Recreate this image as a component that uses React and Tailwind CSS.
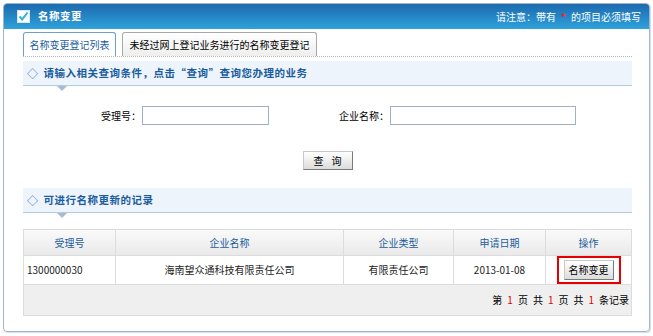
import React from 'react';

const font = { fontFamily: '"Noto Sans CJK SC", "Liberation Sans", sans-serif' };

function SectionTitle({ children }) {
  return (
    <div>
      <div className="h-[25px] bg-[#eef4fc] border-b border-[#b6cade] flex items-center pl-[4px] text-[10.5px] font-bold tracking-[0.5px] text-[#1b5c9c] leading-none">
        <span className="mr-[5px] font-normal text-[11px] text-[#2a6cb0]">◇</span>
        {children}
      </div>
      <div className="ml-[34px] w-0 h-0 border-l-[5px] border-r-[5px] border-t-[5px] border-l-transparent border-r-transparent border-t-[#a9bccf]" />
    </div>
  );
}

function Btn({ children, className = '' }) {
  return (
    <button className={`bg-gradient-to-b from-[#ffffff] to-[#dcdcdc] border border-t-[#c8c8c8] border-l-[#c8c8c8] border-r-[#7a7a7a] border-b-[#7a7a7a] text-[10px] text-black leading-none whitespace-nowrap ${className}`}>
      {children}
    </button>
  );
}

export default function App() {
  return (
    <div className="w-[653px] h-[336px] bg-white pt-[3px] pl-[3px]" style={font}>
      <div className="w-[647px] h-[329px] border border-[#9fb5cd] rounded-[4px] overflow-hidden shadow-[1px_1px_1px_#d4dde8]">
        {/* ── Header ── */}
        <div className="h-[25px] bg-gradient-to-b from-[#1c6aae] to-[#2fa2dc] flex items-center pl-[13px] pr-[8px]">
          <svg width="13" height="13" viewBox="0 0 13 13" className="mr-[8px]">
            <rect x="0.5" y="0.5" width="12" height="12" fill="#ffffff" stroke="#d8e6f2" />
            <path d="M2.5 6.5 L5.2 9.5 L10.5 2.5" fill="none" stroke="#2bb3dd" strokeWidth="2" />
          </svg>
          <span className="text-[10.5px] font-bold tracking-[0.5px] text-white leading-none">名称变更</span>
          <span className="ml-auto text-[10px] text-white leading-none whitespace-nowrap">
            请注意：带有<span className="text-[#ff2020] font-bold mx-[5px]">*</span>的项目必须填写
          </span>
        </div>

        <div className="pl-[19px] pr-[17px]">
          {/* ── Tabs ── */}
          <div className="mt-[4px] flex items-end border-b border-dotted border-[#b8b8b8] h-[24px]">
            <div className="w-[93px] h-[24px] border border-b-0 border-[#6a9fd0] rounded-t-[3px] bg-white flex items-center justify-center text-[10px] leading-none whitespace-nowrap text-[#1b5c9c]">
              名称变更登记列表
            </div>
            <div className="ml-[6px] w-[195px] h-[24px] border border-b-0 border-[#a8a8a8] rounded-t-[3px] bg-gradient-to-b from-[#ffffff] to-[#eeeeee] flex items-center justify-center text-[10px] leading-none whitespace-nowrap text-black">
              未经过网上登记业务进行的名称变更登记
            </div>
          </div>

          {/* ── Query ── */}
          <div className="mt-[4px]">
            <SectionTitle>请输入相关查询条件，点击“查询”查询您办理的业务</SectionTitle>
          </div>

          <div className="mt-[15px] flex items-center text-[10px] text-black leading-none">
            <span className="w-[118px] text-right">受理号：</span>
            <input className="ml-[1px] w-[127px] h-[19px] border border-[#9fb0c4] outline-none" />
            <span className="w-[120px] text-right">企业名称：</span>
            <input className="ml-[1px] w-[186px] h-[19px] border border-[#9fb0c4] outline-none" />
          </div>

          <div className="mt-[26px] flex justify-center">
            <Btn className="w-[50px] h-[19px] tracking-[8px] pl-[8px]">查询</Btn>
          </div>

          {/* ── Records ── */}
          <div className="mt-[18px]">
            <SectionTitle>可进行名称更新的记录</SectionTitle>
          </div>

          <table className="mt-[11px] w-[608px] border-collapse text-[10px] leading-none table-fixed">
            <colgroup>
              <col className="w-[92px]" />
              <col className="w-[228px]" />
              <col className="w-[110px]" />
              <col className="w-[92px]" />
              <col className="w-[86px]" />
            </colgroup>
            <thead>
              <tr className="h-[26px] bg-gradient-to-b from-[#fafafa] to-[#e9e9e9] text-[#1b5c9c]">
                {['受理号', '企业名称', '企业类型', '申请日期', '操作'].map((h) => (
                  <th key={h} className="border border-[#dcdcdc] font-normal">{h}</th>
                ))}
              </tr>
            </thead>
            <tbody>
              <tr className="h-[25px] text-[#222]">
                <td className="border border-[#dcdcdc] pl-[3px]">1300000030</td>
                <td className="border border-[#dcdcdc] text-center">海南望众通科技有限责任公司</td>
                <td className="border border-[#dcdcdc] text-center">有限责任公司</td>
                <td className="border border-[#dcdcdc] text-center">2013-01-08</td>
                <td className="border border-[#dcdcdc] text-center p-0">
                  <div className="inline-flex border-2 border-[#e60000] px-[5px] py-[2px] align-middle">
                    <Btn className="w-[50px] h-[20px]">名称变更</Btn>
                  </div>
                </td>
              </tr>
              <tr className="h-[31px] bg-[#efefef]">
                <td colSpan={5} className="border border-[#dcdcdc] pr-[2px] text-black">
                  <div className="flex justify-end items-center gap-[5px]">
                    <span>第</span>
                    <span className="text-[#e00000]">1</span>
                    <span>页</span>
                    <span>共</span>
                    <span className="text-[#e00000]">1</span>
                    <span>页</span>
                    <span>共</span>
                    <span className="text-[#e00000]">1</span>
                    <span>条记录</span>
                  </div>
                </td>
              </tr>
            </tbody>
          </table>
        </div>
      </div>
    </div>
  );
}
